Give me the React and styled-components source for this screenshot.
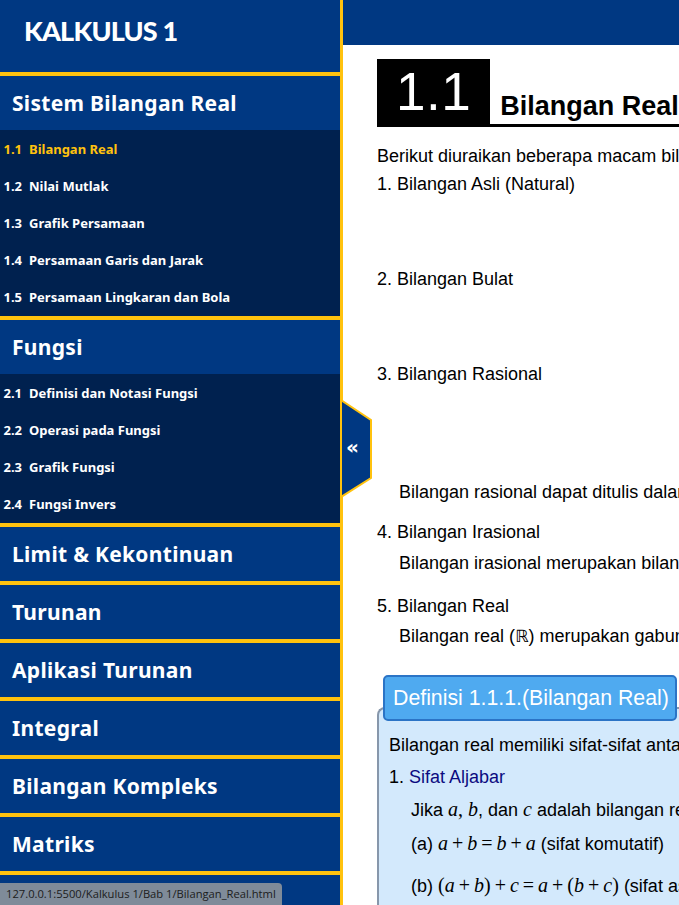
import React from "react"
import styled, { createGlobalStyle } from "styled-components"

const GlobalStyle = createGlobalStyle`
  html, body {
    margin: 0;
    padding: 0;
    height: 100%;
    overflow: hidden;
    background: #ffffff;
  }
  #root {
    height: 100%;
  }
`

const BLUE = "#003882"
const NAVY = "#00214f"
const GOLD = "#ffc20e"

const Page = styled.div`
  display: flex;
  height: 905px;
  overflow: hidden;
  position: relative;
`

const Sidebar = styled.nav`
  flex: 0 0 340px;
  background: ${BLUE};
  border-right: 3px solid ${GOLD};
  font-family: "Noto Sans", sans-serif;
  color: #ffffff;
`

const Brand = styled.div`
  height: 76px;
  box-sizing: border-box;
  border-bottom: 4px solid ${GOLD};
  padding: 14px 0 0 24px;
  font-family: "Lato", sans-serif;
  font-weight: 900;
  font-size: 27px;
  letter-spacing: -0.8px;
  line-height: 34px;
`

const Section = styled.div`
  border-bottom: 4px solid ${GOLD};
`

const SectionTitle = styled.div`
  height: 54px;
  display: flex;
  align-items: center;
  padding-left: 12px;
  font-size: 21px;
  font-weight: 700;
  letter-spacing: 0.3px;
`

const SubList = styled.ul`
  list-style: none;
  margin: 0;
  padding: 0;
  background: ${NAVY};
`

const SubItem = styled.li`
  height: 37.2px;
  display: flex;
  align-items: center;
  font-size: 13px;
  font-weight: 700;
  color: ${(p) => (p.$active ? GOLD : "#ffffff")};
`

const Num = styled.span`
  width: 22px;
  text-align: right;
  margin-right: 7px;
`

const Main = styled.main`
  flex: 1;
  min-width: 0;
  overflow: hidden;
  font-family: "Liberation Sans", Arial, sans-serif;
  color: #000000;
`

const TopBar = styled.div`
  height: 45px;
  background: ${BLUE};
`

const Content = styled.div`
  padding: 14px 0 0 34px;
  white-space: nowrap;
  font-size: 18px;
`

const ChapterHead = styled.div`
  display: flex;
  align-items: flex-end;
  border-bottom: 3px solid #000000;
`

const ChapterNum = styled.div`
  background: #000000;
  color: #ffffff;
  font-size: 53px;
  height: 65px;
  line-height: 66px;
  padding: 0 19px;
  letter-spacing: 0.5px;
`

const ChapterTitle = styled.h1`
  margin: 0 0 1px 10px;
  font-size: 27px;
  font-weight: 700;
  line-height: 34px;
`

const Line = styled.div`
  line-height: 28px;
  margin-top: ${(p) => p.$mt || 0}px;
  padding-left: ${(p) => p.$indent || 0}px;
`

const Blank = styled.div`
  height: ${(p) => p.$h}px;
`

const DefBox = styled.section`
  position: relative;
  margin-top: 57px;
  background: #d3e9fc;
  border: 2px solid #8797ab;
  border-right: none;
  border-radius: 8px 0 0 0;
  padding: 22px 0 40px 10px;
`

const DefTitle = styled.div`
  position: absolute;
  top: -34px;
  left: 4px;
  width: 282px;
  height: 42px;
  box-sizing: content-box;
  background: #4faaf0;
  border: 2px solid #2b74c6;
  border-radius: 5px;
  color: #ffffff;
  font-size: 21.3px;
  line-height: 42px;
  padding-left: 8px;
`

const BoxLine = styled.div`
  line-height: 28px;
  margin-top: ${(p) => p.$mt || 0}px;
  padding-left: ${(p) => p.$indent || 0}px;
`

const Topic = styled.span`
  color: #0b0b80;
`

const MathVar = styled.i`
  font-family: "Liberation Serif", "Times New Roman", serif;
  font-size: 20px;
`

const Op = styled.span`
  font-family: "Liberation Serif", "Times New Roman", serif;
  font-size: 20px;
  padding: 0 4px;
`

const Paren = styled.span`
  font-family: "Liberation Serif", "Times New Roman", serif;
  font-size: 20px;
`

const DoubleR = styled.span`
  font-family: "DejaVu Sans", sans-serif;
  font-size: 17px;
`

const CollapseTab = styled.button`
  position: absolute;
  left: 341px;
  top: 399px;
  width: 33px;
  height: 100px;
  padding: 0;
  border: none;
  background: none;
  cursor: pointer;
  svg {
    display: block;
  }
`

const TabGlyph = styled.span`
  position: absolute;
  left: 5px;
  top: 36px;
  color: #ffffff;
  font-family: "DejaVu Sans", sans-serif;
  font-size: 20px;
  font-weight: 700;
`

const StatusBar = styled.div`
  position: absolute;
  left: 0;
  bottom: 0;
  height: 22px;
  padding: 0 6px;
  background: #7f8b99;
  border-top-right-radius: 4px;
  color: #1c1c1c;
  font-family: "Open Sans", sans-serif;
  font-size: 11.2px;
  line-height: 22px;
`

const bab1 = [
  ["1.1", "Bilangan Real", true],
  ["1.2", "Nilai Mutlak"],
  ["1.3", "Grafik Persamaan"],
  ["1.4", "Persamaan Garis dan Jarak"],
  ["1.5", "Persamaan Lingkaran dan Bola"],
]

const bab2 = [
  ["2.1", "Definisi dan Notasi Fungsi"],
  ["2.2", "Operasi pada Fungsi"],
  ["2.3", "Grafik Fungsi"],
  ["2.4", "Fungsi Invers"],
]

const others = [
  "Limit & Kekontinuan",
  "Turunan",
  "Aplikasi Turunan",
  "Integral",
  "Bilangan Kompleks",
  "Matriks",
]

const App = () => {
  return (
    <>
      <GlobalStyle />
      <Page>
        <Sidebar>
          <Brand>KALKULUS 1</Brand>
          <Section>
            <SectionTitle>Sistem Bilangan Real</SectionTitle>
            <SubList>
              {bab1.map(([n, t, a]) => (
                <SubItem key={n} $active={a}>
                  <Num>{n}</Num>
                  {t}
                </SubItem>
              ))}
            </SubList>
          </Section>
          <Section>
            <SectionTitle>Fungsi</SectionTitle>
            <SubList>
              {bab2.map(([n, t]) => (
                <SubItem key={n}>
                  <Num>{n}</Num>
                  {t}
                </SubItem>
              ))}
            </SubList>
          </Section>
          {others.map((t) => (
            <Section key={t}>
              <SectionTitle>{t}</SectionTitle>
            </Section>
          ))}
        </Sidebar>

        <Main>
          <TopBar />
          <Content>
            <ChapterHead>
              <ChapterNum>1.1</ChapterNum>
              <ChapterTitle>Bilangan Real</ChapterTitle>
            </ChapterHead>

            <Line $mt={15}>Berikut diuraikan beberapa macam bilangan</Line>
            <Line>1. Bilangan Asli (Natural)</Line>
            <Blank $h={67} />
            <Line>2. Bilangan Bulat</Line>
            <Blank $h={67} />
            <Line>3. Bilangan Rasional</Line>
            <Blank $h={90} />
            <Line $indent={22}>Bilangan rasional dapat ditulis dalam bentuk</Line>
            <Line $mt={12}>4. Bilangan Irasional</Line>
            <Line $mt={3} $indent={22}>
              Bilangan irasional merupakan bilangan yang
            </Line>
            <Line $mt={15}>5. Bilangan Real</Line>
            <Line $mt={2} $indent={22}>
              Bilangan real (<DoubleR>ℝ</DoubleR>) merupakan gabungan
            </Line>

            <DefBox>
              <DefTitle>Definisi 1.1.1.(Bilangan Real)</DefTitle>
              <BoxLine>Bilangan real memiliki sifat-sifat antara lain</BoxLine>
              <BoxLine $mt={4}>
                1. <Topic>Sifat Aljabar</Topic>
              </BoxLine>
              <BoxLine $mt={4} $indent={22}>
                Jika <MathVar>a</MathVar>
                <Paren>, </Paren>
                <MathVar>b</MathVar>, dan <MathVar>c</MathVar> adalah bilangan real
              </BoxLine>
              <BoxLine $mt={5} $indent={22}>
                (a) <MathVar>a</MathVar>
                <Op>+</Op>
                <MathVar>b</MathVar>
                <Op>=</Op>
                <MathVar>b</MathVar>
                <Op>+</Op>
                <MathVar>a</MathVar> (sifat komutatif)
              </BoxLine>
              <BoxLine $mt={13} $indent={22}>
                (b) <Paren>(</Paren>
                <MathVar>a</MathVar>
                <Op>+</Op>
                <MathVar>b</MathVar>
                <Paren>)</Paren>
                <Op>+</Op>
                <MathVar>c</MathVar>
                <Op>=</Op>
                <MathVar>a</MathVar>
                <Op>+</Op>
                <Paren>(</Paren>
                <MathVar>b</MathVar>
                <Op>+</Op>
                <MathVar>c</MathVar>
                <Paren>)</Paren> (sifat asosiatif)
              </BoxLine>
            </DefBox>
          </Content>
        </Main>

        <CollapseTab aria-label="Tutup sidebar">
          <svg width="33" height="100" viewBox="0 0 33 100">
            <polygon
              points="0,1 30,21 30,79 0,98"
              fill={BLUE}
              stroke={GOLD}
              strokeWidth="2"
            />
          </svg>
          <TabGlyph>«</TabGlyph>
        </CollapseTab>

        <StatusBar>127.0.0.1:5500/Kalkulus 1/Bab 1/Bilangan_Real.html</StatusBar>
      </Page>
    </>
  )
}

export default App
